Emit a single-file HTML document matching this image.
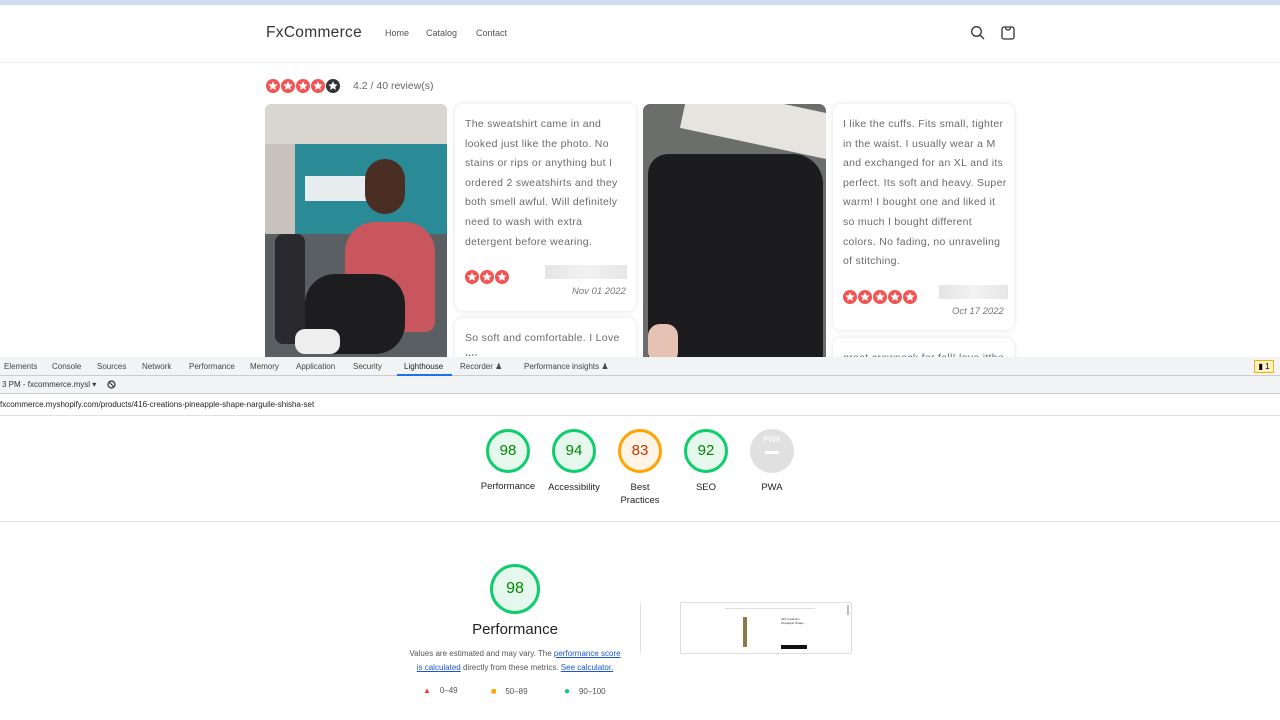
<!DOCTYPE html>
<html><head><meta charset="utf-8">
<style>
*{margin:0;padding:0;box-sizing:border-box}
body{width:1280px;height:720px;overflow:hidden;background:#fff;font-family:"Liberation Sans",sans-serif;position:relative}
.a{position:absolute}
.shop{font-family:"Liberation Sans",sans-serif;color:#555}
.card{position:absolute;background:#fff;border-radius:8px;box-shadow:0 0 6px rgba(0,0,0,.12)}
.rt{font-family:"Liberation Sans",sans-serif;font-size:10.5px;line-height:19.6px;color:#6b6b6b;letter-spacing:0.3px;white-space:nowrap}
.date{font-family:"Liberation Sans",sans-serif;font-size:9.5px;font-style:italic;color:#777}
.blur{background:linear-gradient(90deg,#e4e4e4,#f2f2f2,#e6e6e6);height:14px}
.tabs span{position:absolute;top:362px;font-size:8px;color:#444}
.g{position:absolute;width:44px;height:44px;border-radius:50%;font-size:15px;text-align:center;line-height:38px}
.lbl{position:absolute;font-size:9.5px;color:#222;text-align:center;width:80px;line-height:13px}
</style></head><body>
<div class="a" style="left:0;top:0;width:1280px;height:5px;background:#cfdcf2"></div>
<div class="a shop" style="left:266px;top:24px;font-size:15.5px;color:#333;letter-spacing:0.3px">FxCommerce</div>
<div class="a shop" style="left:385px;top:28px;font-size:9px">Home</div>
<div class="a shop" style="left:426px;top:28px;font-size:9px">Catalog</div>
<div class="a shop" style="left:476px;top:28px;font-size:9px">Contact</div>
<svg class="a" style="left:970px;top:25px" width="16" height="16" viewBox="0 0 16 16"><circle cx="6.5" cy="6.5" r="4.8" fill="none" stroke="#333" stroke-width="1.3"/><path d="M10 10l4 4" stroke="#333" stroke-width="1.3"/></svg>
<svg class="a" style="left:1000px;top:25px" width="16" height="16" viewBox="0 0 16 16"><rect x="2" y="2" width="12" height="12" rx="2" fill="none" stroke="#333" stroke-width="1.3"/><path d="M5.5 2.5a2.5 2.5 0 0 0 5 0" fill="none" stroke="#333" stroke-width="1.3"/></svg>
<div class="a" style="left:0;top:62px;width:1280px;height:1px;background:#eee"></div>

<svg width="0" height="0" style="position:absolute"><defs><g id="st"><circle cx="7" cy="7" r="7" fill="#f25353"/><path d="M7 2.3l1.4 3 3.2.3-2.4 2.1.7 3.2L7 9.3 4.1 10.9l.7-3.2L2.4 5.6l3.2-.3z" fill="#fff"/></g><g id="sd"><circle cx="7" cy="7" r="7" fill="#333"/><path d="M7 2.3l1.4 3 3.2.3-2.4 2.1.7 3.2L7 9.3 4.1 10.9l.7-3.2L2.4 5.6l3.2-.3z" fill="#fff"/></g></defs></svg>
<svg class="a" style="left:266px;top:79px" width="76" height="14"><use href="#st"/><use href="#st" x="15"/><use href="#st" x="30"/><use href="#st" x="45"/><use href="#sd" x="60"/></svg>
<div class="a shop" style="left:353px;top:80px;font-size:10.5px;color:#666">4.2 / 40 review(s)</div>

<!-- photo 1 -->
<div class="a" style="left:265px;top:104px;width:182px;height:253px;border-radius:7px 7px 0 0;overflow:hidden;background:#2a8a96">
 <div class="a" style="left:0;top:0;width:182px;height:40px;background:#d9d6d0"></div>
 <div class="a" style="left:0;top:40px;width:30px;height:90px;background:#c7c3bc"></div>
 <div class="a" style="left:40px;top:72px;width:70px;height:25px;background:#e8eef0"></div>
 <div class="a" style="left:0;top:130px;width:182px;height:130px;background:#5a5f64"></div>
 <div class="a" style="left:80px;top:118px;width:90px;height:110px;background:#c9555f;border-radius:30px 30px 10px 10px"></div>
 <div class="a" style="left:40px;top:170px;width:100px;height:80px;background:#1d1d20;border-radius:30px"></div>
 <div class="a" style="left:100px;top:55px;width:40px;height:55px;background:#4a2e24;border-radius:20px"></div>
 <div class="a" style="left:10px;top:130px;width:30px;height:110px;background:#2a2a2e;border-radius:8px"></div>
 <div class="a" style="left:30px;top:225px;width:45px;height:25px;background:#eee;border-radius:10px"></div>
</div>
<!-- photo 2 -->
<div class="a" style="left:643px;top:104px;width:183px;height:253px;border-radius:7px 7px 0 0;overflow:hidden;background:#6c6e6c">
 <div class="a" style="left:40px;top:-5px;width:150px;height:45px;background:#e6e4df;transform:rotate(12deg)"></div>
 <div class="a" style="left:5px;top:50px;width:175px;height:215px;background:#1c1c1f;border-radius:20px 30px 0 0"></div>
 <div class="a" style="left:5px;top:220px;width:30px;height:40px;background:#e5c2b3;border-radius:12px"></div>
</div>

<div class="card" style="left:455px;top:104px;width:181px;height:207px"></div>
<div class="a rt" style="left:465px;top:115px">The sweatshirt came in and<br>looked just like the photo. No<br>stains or rips or anything but I<br>ordered 2 sweatshirts and they<br>both smell awful. Will definitely<br>need to wash with extra<br>detergent before wearing.</div>
<svg class="a" style="left:465px;top:270px" width="46" height="14"><use href="#st"/><use href="#st" x="15"/><use href="#st" x="30"/></svg>
<div class="a blur" style="left:545px;top:265px;width:82px"></div>
<div class="a date" style="left:572px;top:286px">Nov 01 2022</div>
<div class="card" style="left:455px;top:318px;width:181px;height:60px"></div>
<div class="a rt" style="left:465px;top:329px;height:27px;overflow:hidden">So soft and comfortable. I Love<br>It!!</div>

<div class="card" style="left:833px;top:104px;width:181px;height:226px"></div>
<div class="a rt" style="left:843px;top:115px">I like the cuffs. Fits small, tighter<br>in the waist. I usually wear a M<br>and exchanged for an XL and its<br>perfect. Its soft and heavy. Super<br>warm! I bought one and liked it<br>so much I bought different<br>colors. No fading, no unraveling<br>of stitching.</div>
<svg class="a" style="left:843px;top:290px" width="76" height="14"><use href="#st"/><use href="#st" x="15"/><use href="#st" x="30"/><use href="#st" x="45"/><use href="#st" x="60"/></svg>
<div class="a blur" style="left:939px;top:285px;width:69px"></div>
<div class="a date" style="left:952px;top:306px">Oct 17 2022</div>
<div class="card" style="left:833px;top:338px;width:181px;height:40px"></div>
<div class="a rt" style="left:843px;top:349px;height:8px;overflow:hidden">great crewneck for fall! love itthe</div>

<!-- devtools -->
<div class="a" style="left:0;top:357px;width:1280px;height:363px;background:#fff"></div>
<div class="a" style="left:0;top:357px;width:1280px;height:19px;background:#f1f3f4;border-bottom:1px solid #ccc"></div>
<div class="tabs">
<span style="left:4px">Elements</span><span style="left:52px">Console</span><span style="left:97px">Sources</span><span style="left:142px">Network</span><span style="left:189px">Performance</span><span style="left:250px">Memory</span><span style="left:296px">Application</span><span style="left:353px">Security</span><span style="left:404px;color:#222">Lighthouse</span><span style="left:460px">Recorder ♟</span><span style="left:524px">Performance insights ♟</span>
</div>
<div class="a" style="left:397px;top:374px;width:55px;height:2px;background:#1a73e8"></div>
<div class="a" style="left:1254px;top:360px;width:20px;height:13px;background:#fdf0c8;border:1px solid #e8b400;font-size:8px;text-align:center;line-height:11px">▮ 1</div>
<div class="a" style="left:0;top:376px;width:1280px;height:18px;background:#f1f3f4;border-bottom:1px solid #ccc"></div>
<div class="a" style="left:2px;top:380px;font-size:8px;color:#333">3 PM - fxcommerce.mysl ▾</div>
<svg class="a" style="left:107px;top:380px" width="9" height="9"><circle cx="4.5" cy="4.5" r="3.5" fill="none" stroke="#333" stroke-width="1.2"/><path d="M2 2l5 5" stroke="#333" stroke-width="1.2"/></svg>
<div class="a" style="left:0;top:400px;font-size:8px;color:#222">fxcommerce.myshopify.com/products/416-creations-pineapple-shape-narguile-shisha-set</div>
<div class="a" style="left:0;top:415px;width:1280px;height:1px;background:#e0e0e0"></div>

<div class="g" style="left:486px;top:429px;background:#e6f8ee;border:3px solid #0cce6b;color:#080">98</div>
<div class="g" style="left:552px;top:429px;background:#e6f8ee;border:3px solid #0cce6b;color:#080">94</div>
<div class="g" style="left:618px;top:429px;background:#fff4e6;border:3px solid #ffa400;color:#c33300">83</div>
<div class="g" style="left:684px;top:429px;background:#e6f8ee;border:3px solid #0cce6b;color:#080">92</div>
<div class="g" style="left:750px;top:429px;background:#e0e0e0;color:#fff;font-size:8px;line-height:22px">PWA<div style="width:14px;height:3px;background:#fff;margin:0 auto"></div></div>
<div class="lbl" style="left:468px;top:480px">Performance</div>
<div class="lbl" style="left:534px;top:481px">Accessibility</div>
<div class="lbl" style="left:600px;top:481px">Best<br>Practices</div>
<div class="lbl" style="left:666px;top:481px">SEO</div>
<div class="lbl" style="left:732px;top:481px">PWA</div>
<div class="a" style="left:0;top:521px;width:1280px;height:1px;background:#e0e0e0"></div>

<div class="g" style="left:490px;top:564px;width:50px;height:50px;line-height:44px;font-size:16px;background:#e6f8ee;border:3px solid #0cce6b;color:#080">98</div>
<div class="a" style="left:415px;top:621px;width:200px;text-align:center;font-size:15px;color:#222">Performance</div>
<div class="a" style="left:400px;top:647px;width:230px;text-align:center;font-size:8px;line-height:13.5px;color:#555">Values are estimated and may vary. The <u style="color:#1a55e0">performance score<br>is calculated</u> directly from these metrics. <u style="color:#1a55e0">See calculator.</u></div>
<div class="a" style="left:423px;top:686px;font-size:8px;color:#555"><span style="color:#f33">▲</span>&nbsp;&nbsp;&nbsp; 0–49</div>
<div class="a" style="left:491px;top:686px;font-size:8px;color:#555"><span style="color:#ffa400;font-size:9px">■</span>&nbsp;&nbsp;&nbsp; 50–89</div>
<div class="a" style="left:564px;top:686px;font-size:8px;color:#555"><span style="color:#0cce6b;font-size:10px">●</span>&nbsp;&nbsp;&nbsp; 90–100</div>
<div class="a" style="left:640px;top:603px;width:1px;height:50px;background:#ddd"></div>
<div class="a" style="left:680px;top:602px;width:172px;height:52px;border:1px solid #ddd;border-radius:2px;background:#fff">
 <div class="a" style="left:44px;top:5px;width:90px;height:1px;background:#ddd"></div>
 <div class="a" style="left:62px;top:14px;width:4px;height:30px;background:#8a7a4a"></div>
 <div class="a" style="left:100px;top:14px;width:25px;height:20px;font-size:3px;color:#333">416 Creations Pineapple Shape</div>
 <div class="a" style="left:100px;top:42px;width:26px;height:4px;background:#111"></div>
 <div class="a" style="left:166px;top:2px;width:2px;height:10px;background:#bbb"></div>
</div>
</body></html>
